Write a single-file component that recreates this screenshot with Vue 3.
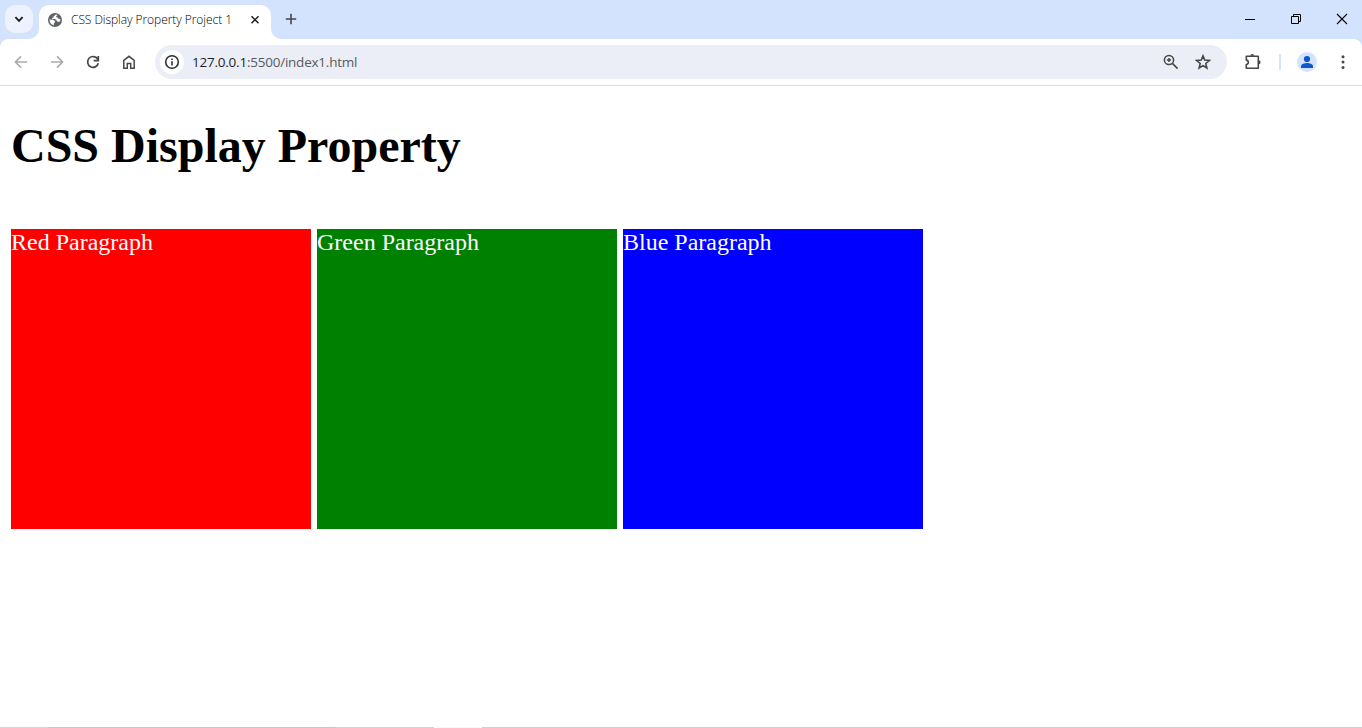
<script setup>
const boxes = [
  { label: 'Red Paragraph', tone: 'red' },
  { label: 'Green Paragraph', tone: 'green' },
  { label: 'Blue Paragraph', tone: 'blue' },
]
</script>

<template>
  <div class="window">
    <header class="tabstrip">
      <button class="tab-search">
        <svg width="28" height="28" viewBox="0 0 28 28"><path d="M10.400 12.200 14 15.800l3.600-3.600" fill="none" stroke="#1f1f1f" stroke-width="1.900" /></svg>
      </button>
      <div class="tab">
        <svg class="curve left" width="10" height="10"><path d="M10 0V10H0A10 10 0 0 0 10 0Z" fill="#fff" /></svg>
        <svg class="globe" width="14" height="14" viewBox="0 0 14 14">
          <circle cx="7" cy="7" r="7" fill="#5f6368" />
          <path d="M7.800 1.500 5.500 3.600v1.200H4.200v1.300h3.500v1.500h1.500v1.100h2.600A5.400 5.400 0 0 0 12.300 6l-1.900-.3-.9-1.400H8.200V3.200l1.300-1.100ZM1.600 6.600l3.700.1 1.700 1.500v1.500H5.900v2.600A5.500 5.500 0 0 1 1.600 6.600Z" fill="#fff" />
        </svg>
        <span class="tab-title">CSS Display Property Project 1</span>
        <svg class="tab-close" width="10" height="10" viewBox="0 0 10 10"><path d="m1.500 1.300 7 7m0-7-7 7" fill="none" stroke="#1f1f1f" stroke-width="1.500" /></svg>
        <svg class="curve right" width="10" height="10"><path d="M0 0V10H10A10 10 0 0 1 0 0Z" fill="#fff" /></svg>
      </div>
      <svg class="new-tab" width="12" height="12" viewBox="0 0 12 12"><path d="M6 .8v10.400M.8 6h10.400" stroke="#474747" stroke-width="1.600" /></svg>
      <div class="controls">
        <svg width="46" height="39" viewBox="0 0 46 39"><path d="M18 19.500h10" stroke="#000" /></svg>
        <svg width="46" height="39" viewBox="0 0 46 39"><path d="M18.500 16.500h7v7h-7zM20.500 16.500v-2h7v7h-2" fill="none" stroke="#000" /></svg>
        <svg width="46" height="39" viewBox="0 0 46 39"><path d="m18 14 10 10m0-10L18 24" stroke="#000" stroke-width="1.100" /></svg>
      </div>
    </header>

    <nav class="toolbar">
      <div class="nav-icons">
        <svg width="16" height="16" viewBox="0 0 16 16"><path d="M14 8H2.800M8 2.400 2.400 8 8 13.600" fill="none" stroke="#aaa" stroke-width="1.600" /></svg>
        <svg width="16" height="16" viewBox="0 0 16 16"><path d="M2 8h11.200M8 2.400 13.600 8 8 13.600" fill="none" stroke="#aaa" stroke-width="1.600" /></svg>
        <svg width="16" height="16" viewBox="0 0 16 16"><path d="M12.600 5A5.400 5.400 0 1 0 13.300 9.200M13.300 2v4.600H8.600" fill="none" stroke="#474747" stroke-width="1.700" /></svg>
        <svg width="16" height="16" viewBox="0 0 16 16"><path d="M2.800 6.300 8 2.300l5.200 4v7.900H9.700V9.500H6.300v4.700H2.800Z" fill="none" stroke="#474747" stroke-width="1.500" /></svg>
      </div>
      <div class="omnibox">
        <span class="info">
          <svg width="16" height="16" viewBox="0 0 16 16"><circle cx="8" cy="8" r="6.300" fill="none" stroke="#303030" stroke-width="1.600" /><path d="M8 7.200v4.200M8 4.400V6" stroke="#303030" stroke-width="1.600" /></svg>
        </span>
        <span class="url"><span class="host">127.0.0.1</span>:5500/index1.html</span>
        <svg class="zoom" width="16" height="16" viewBox="0 0 16 16"><circle cx="6" cy="6" r="4.600" fill="none" stroke="#474747" stroke-width="1.500" /><path d="m9.400 9.400 5.200 5.200M6 3.900v4.200M3.900 6h4.200" stroke="#474747" stroke-width="1.500" /></svg>
        <svg class="star" width="16" height="16" viewBox="0 0 16 16"><path d="m8 1.900 1.700 4.200 4.700.4-3.600 3 1.100 4.500L8 11.600 4.100 14l1.100-4.500-3.600-3 4.700-.4Z" fill="none" stroke="#474747" stroke-width="1.600" /></svg>
      </div>
      <svg class="puzzle" width="18" height="18" viewBox="0 0 18 18"><path d="M2.300 3.300h12v12h-12v-3.800c2.700-.4 2.700-4 0-4.400Z" fill="none" stroke="#474747" stroke-width="1.600" stroke-linejoin="round" /><path d="M6.300 2.800a2 1.900 0 0 1 4 0ZM14.700 7.300a1.900 2 0 0 1 0 4Z" fill="#474747" /></svg>
      <span class="divider"></span>
      <span class="avatar">
        <svg width="20" height="20" viewBox="0 0 20 20"><circle cx="10" cy="7" r="3.100" fill="#0b57d0" /><path d="M4 16v-1.800c0-2.200 3.600-3.200 6-3.200s6 1 6 3.200V16Z" fill="#0b57d0" /></svg>
      </span>
      <svg class="menu" width="4" height="16" viewBox="0 0 4 16" fill="#474747"><circle cx="2" cy="2.800" r="1.500" /><circle cx="2" cy="8.100" r="1.500" /><circle cx="2" cy="13.400" r="1.500" /></svg>
    </nav>

    <main class="page">
      <h1>CSS Display Property</h1>
      <div class="boxes">
        <p v-for="box in boxes" :key="box.tone" :class="['box', box.tone]">{{ box.label }}</p>
      </div>
    </main>
    <footer class="edge"></footer>
  </div>
</template>

<style>
body { margin: 0; overflow: hidden; }
</style>

<style scoped>
.window {
  display: flex;
  flex-direction: column;
  width: 1362px;
  height: 728px;
  background: #fff;
  overflow: hidden;
  font-family: "Open Sans", "Noto Sans", sans-serif;
}
svg { display: block; flex: none; }
.tabstrip {
  display: flex;
  height: 39px;
  flex: none;
  box-sizing: border-box;
  padding-left: 5px;
  background: #d3e3fd;
}
.tab-search {
  width: 28px;
  height: 28px;
  margin: 5px 6px 0 0;
  padding: 0;
  border: 0;
  border-radius: 10px;
  background: #ecf3fe;
}
.tab {
  position: relative;
  display: flex;
  align-items: center;
  box-sizing: border-box;
  width: 232px;
  height: 34px;
  margin-top: 5px;
  padding: 0 11px 5px 9px;
  border-radius: 10px 10px 0 0;
  background: #fff;
}
.curve { position: absolute; bottom: 0; }
.left { left: -10px; }
.right { right: -10px; }
.tab-title {
  margin-left: 9px;
  font-size: 12px;
  font-weight: 300;
  letter-spacing: -0.06px;
  white-space: nowrap;
  color: #000;
}
.tab-close { margin-left: auto; }
.new-tab { margin: 13px 0 0 14px; }
.controls { display: flex; margin-left: auto; margin-right: -3px; }
.toolbar {
  display: flex;
  align-items: center;
  flex: none;
  box-sizing: border-box;
  height: 47px;
  border-bottom: 1px solid #dedede;
  background: radial-gradient(circle at 8px 8px, #fff 7.500px, #d3e3fd 8px) 0 0 / 8px 8px no-repeat,
    radial-gradient(circle at 0 8px, #fff 7.500px, #d3e3fd 8px) 100% 0 / 8px 8px no-repeat, #fff;
}
.nav-icons { display: flex; gap: 20px; margin-left: 13px; }
.omnibox {
  display: flex;
  align-items: center;
  box-sizing: border-box;
  width: 1072px;
  height: 34px;
  margin-left: 18px;
  padding: 0 16px 0 5px;
  border-radius: 17px;
  background: #ebeef7;
}
.info {
  display: grid;
  place-items: center;
  width: 24px;
  height: 24px;
  border-radius: 50%;
  background: #fff;
}
.url {
  margin-left: 8px;
  font-size: 13.5px;
  letter-spacing: -0.23px;
  white-space: nowrap;
  color: #5a5a5a;
}
.host { color: #1f1f1f; }
.zoom { margin-left: auto; }
.star { margin-left: 16px; }
.puzzle { margin-left: 17px; }
.divider { width: 2px; height: 16px; margin-left: 17px; background: #d3e3fd; }
.avatar { width: 20px; height: 20px; margin-left: 16px; border-radius: 50%; background: #d3e3fd; }
.menu { margin-left: 24px; }
.page {
  flex: 1;
  padding: 0 11px;
  font-family: "Liberation Serif", "Times New Roman", serif;
}
h1 {
  margin: 32px 0 0;
  font-size: 48px;
  line-height: 55px;
  font-weight: bold;
  color: #000;
}
.boxes { display: flex; gap: 6px; margin-top: 56px; }
.box {
  width: 300px;
  height: 300px;
  margin: 0;
  font-size: 24px;
  line-height: 27px;
  color: #fff;
}
.red { background: #f00; }
.green { background: #008000; }
.blue { background: #00f; }
.edge {
  height: 1px;
  flex: none;
  background: linear-gradient(90deg, #d4d4d4 0 48px, #c8c8c8 48px 335px, #d2d2d2 335px 434px, #f8f8f8 434px 482px, #d0d0d0 482px);
}
</style>
